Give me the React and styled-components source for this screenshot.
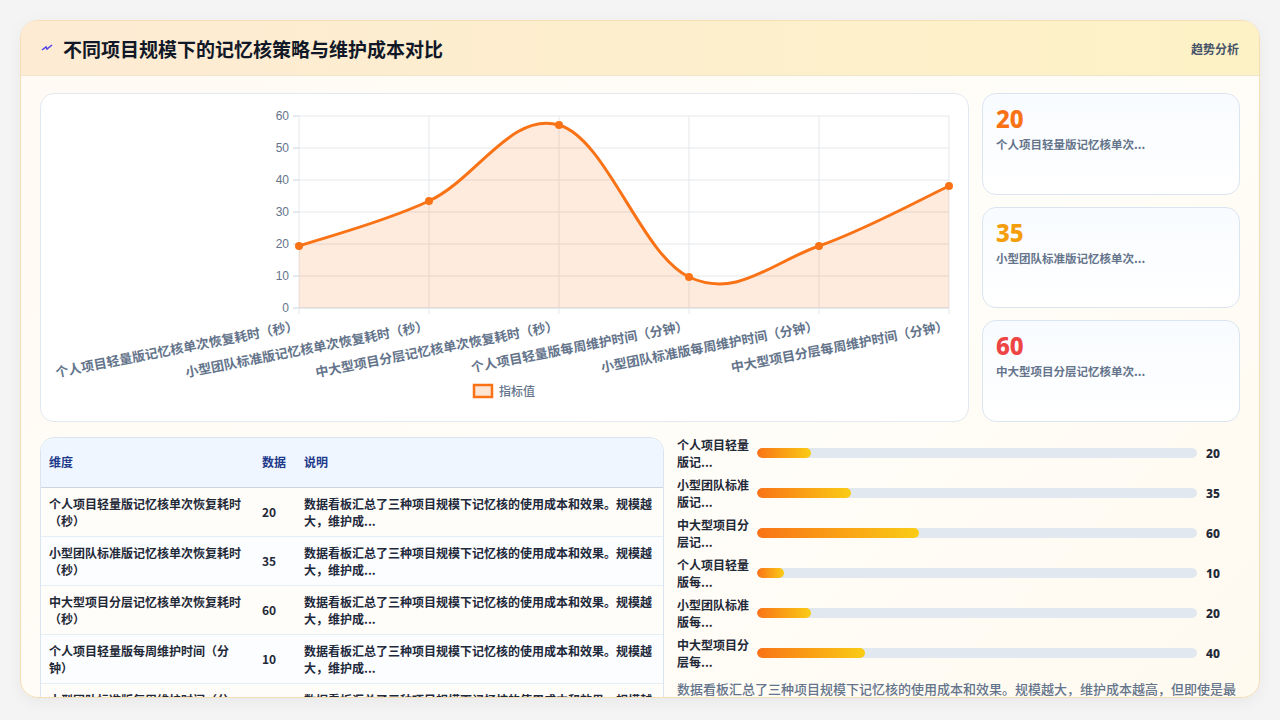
import React from "react";
import styled, { createGlobalStyle } from "styled-components";

const G = createGlobalStyle`
  html,body{margin:0;padding:0;background:#f4f4f5;}
  body{font-family:"Noto Sans CJK SC","Noto Sans",sans-serif;}
  *{box-sizing:border-box;}
`;
const Page = styled.div`padding:20px;height:720px;overflow:hidden;`;
const Card = styled.div`
  height:678px;border:1px solid #f6dfb6;border-radius:18px;overflow:hidden;
  background:linear-gradient(135deg,#fffaf3,#fffdf8 60%,#fffaf0);
  box-shadow:0 4px 16px rgba(0,0,0,0.05);
`;
const Header = styled.div`
  height:55px;display:flex;align-items:center;justify-content:space-between;
  padding:0 20px;background:linear-gradient(90deg,#fdebd4,#fdf2c6);
  border-bottom:1px solid #f1e4cc;
`;
const Title = styled.h1`margin:0;font-size:19px;font-weight:700;color:#111827;display:flex;align-items:center;gap:10px;`;
const Tag = styled.span`font-size:12px;font-weight:700;color:#475569;`;
const Body = styled.div`padding:17px 19px 0;display:flex;flex-direction:column;gap:15px;`;
const TopRow = styled.div`display:flex;gap:13px;height:329px;`;
const ChartCard = styled.div`width:929px;border:1px solid #e2e8f0;border-radius:14px;background:#fff;position:relative;`;
const Stats = styled.div`flex:1;display:flex;flex-direction:column;gap:12px;`;
const Stat = styled.div`
  flex:1;border:1px solid #dbe5f1;border-radius:14px;padding:10px 13px;
  background:linear-gradient(180deg,#f8fbff,#fff);
`;
const StatVal = styled.div`font-size:24px;font-weight:800;color:${p=>p.c};line-height:30px;font-family:"Noto Sans",sans-serif;`;
const StatLbl = styled.div`font-size:11.5px;font-weight:700;color:#64748b;margin-top:2px;`;
const BottomRow = styled.div`display:flex;gap:13px;`;
const TableBox = styled.div`width:624px;border:1px solid #dbe5f1;border-radius:14px 14px 0 0;overflow:hidden;background:#fff;`;
const Table = styled.table`width:100%;border-collapse:collapse;font-size:12px;font-weight:700;table-layout:fixed;`;
const Th = styled.th`text-align:left;background:#eff6ff;color:#1e3a8a;padding:8px;height:49px;border-bottom:1px solid #cbd5e1;font-size:12px;line-height:16px;`;
const Td = styled.td`padding:6px 8px;color:${p=>p.c||"#1f2937"};border-bottom:1px solid #e5edf5;line-height:17px;height:49px;vertical-align:middle;`;
const Tr = styled.tr`background:${p=>p.alt?"#fbfdff":"#fffdfa"};`;
const Bars = styled.div`flex:1;display:flex;flex-direction:column;margin-top:-4px;`;
const BarRow = styled.div`display:flex;align-items:center;height:40px;`;
const BarLbl = styled.div`width:80px;font-size:12px;font-weight:700;color:#1f2937;line-height:17px;`;
const Track = styled.div`width:440px;height:10px;border-radius:5px;background:#e2e8f0;overflow:hidden;`;
const Fill = styled.div`height:100%;border-radius:5px;background:linear-gradient(90deg,#f97316,#facc15);`;
const BarVal = styled.div`margin-left:9px;font-size:12px;font-weight:800;color:#1f2937;font-family:"Noto Sans",sans-serif;`;
const Note = styled.div`font-size:13px;color:#64748b;margin-top:6px;white-space:nowrap;font-weight:500;`;

const xs=[258,388,518,648,778,908], ys=[152,107,31,183,152,92];
const pts=xs.map((x,i)=>[x,ys[i]]);
function path(){let d=`M${pts[0][0]},${pts[0][1]}`;for(let i=0;i<pts.length-1;i++){const p0=pts[i-1]||pts[i],p1=pts[i],p2=pts[i+1],p3=pts[i+2]||p2;const t=0.55/3*2;d+=` C${p1[0]+(p2[0]-p0[0])*t/2},${p1[1]+(p2[1]-p0[1])*t/2} ${p2[0]-(p3[0]-p1[0])*t/2},${p2[1]-(p3[1]-p1[1])*t/2} ${p2[0]},${p2[1]}`;}return d;}
const labels=["个人项目轻量版记忆核单次恢复耗时（秒）","小型团队标准版记忆核单次恢复耗时（秒）","中大型项目分层记忆核单次恢复耗时（秒）","个人项目轻量版每周维护时间（分钟）","小型团队标准版每周维护时间（分钟）","中大型项目分层每周维护时间（分钟）"];
const short=["个人项目轻量版记...","小型团队标准版记...","中大型项目分层记...","个人项目轻量版每...","小型团队标准版每...","中大型项目分层每..."];
const vals=[20,35,60,10,20,40];
const desc="数据看板汇总了三种项目规模下记忆核的使用成本和效果。规模越大，维护成...";

function Chart(){const d=path();const top=22,bot=214;
  return <svg width="929" height="329" style={{display:"block"}}>
    {[0,10,20,30,40,50,60].map(v=>{const y=bot-v*3.2;return <g key={v}><line x1={258} x2={908} y1={y} y2={y} stroke={v===0?"#cbd5e1":"#e5e7eb"}/><line x1={252} x2={258} y1={y} y2={y} stroke="#cbd5e1"/><text x={248} y={y+4} textAnchor="end" fontSize="12" fill="#64748b" fontFamily="Liberation Sans">{v}</text></g>})}
    {xs.map(x=><line key={x} x1={x} x2={x} y1={top} y2={bot+6} stroke="#e5e7eb"/>)}
    <path d={d+` L908,${bot} L258,${bot} Z`} fill="rgba(249,115,22,0.14)"/>
    <path d={d} fill="none" stroke="#f97316" strokeWidth="3"/>
    {pts.map(([x,y])=><circle key={x} cx={x} cy={y} r="4" fill="#f97316"/>)}
    {labels.map((l,i)=><text key={i} transform={`translate(${xs[i]},${bot+22}) rotate(-11)`} textAnchor="end" fontSize="13" fontWeight="700" fill="#64748b">{l}</text>)}
    <rect x="433" y="291" width="18" height="12" fill="#fde5d3" stroke="#f97316" strokeWidth="2.5"/>
    <text x="458" y="302" fontSize="12" fill="#64748b" fontWeight="500">指标值</text>
  </svg>}

export default function App(){return <><G/><Page><Card>
  <Header><Title><svg width="12" height="12" viewBox="0 0 12 12"><path d="M1 8 L5 5 L6 7 L11 3" stroke="#4f46e5" strokeWidth="1.5" fill="none"/></svg>不同项目规模下的记忆核策略与维护成本对比</Title><Tag>趋势分析</Tag></Header>
  <Body>
    <TopRow><ChartCard><Chart/></ChartCard>
      <Stats>{[[20,"#f97316","个人项目轻量版记忆核单次..."],[35,"#f59e0b","小型团队标准版记忆核单次..."],[60,"#ef4444","中大型项目分层记忆核单次..."]].map(([v,c,l])=><Stat key={v}><StatVal c={c}>{v}</StatVal><StatLbl>{l}</StatLbl></Stat>)}</Stats>
    </TopRow>
    <BottomRow>
      <TableBox><Table><thead><tr><Th style={{width:213}}>维度</Th><Th style={{width:42}}>数据</Th><Th>说明</Th></tr></thead>
        <tbody>{labels.map((l,i)=><Tr key={i} alt={i%2}><Td>{l}</Td><Td>{vals[i]}</Td><Td c="#1e293b">{desc}</Td></Tr>)}</tbody></Table></TableBox>
      <Bars>{short.map((s,i)=><BarRow key={i}><BarLbl>{s.slice(0,6)}<br/>{s.slice(6)}</BarLbl><Track><Fill style={{width:`${vals[i]/163*100}%`}}/></Track><BarVal>{vals[i]}</BarVal></BarRow>)}
        <Note>数据看板汇总了三种项目规模下记忆核的使用成本和效果。规模越大，维护成本越高，但即使是最</Note></Bars>
    </BottomRow>
  </Body>
</Card></Page></>}
